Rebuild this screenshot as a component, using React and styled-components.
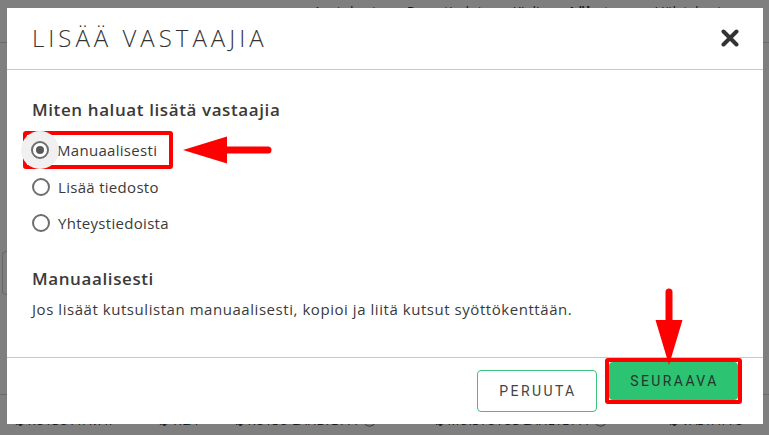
import React from 'react';
import styled, { createGlobalStyle } from 'styled-components';

const GlobalStyle = createGlobalStyle`
  html, body {
    margin: 0;
    padding: 0;
    background: #fff;
    font-family: "Open Sans", Lato, sans-serif;
    overflow: hidden;
  }
`;

/* page behind the dialog */
const Page = styled.div`
  width: 769px;
  height: 435px;
  display: flex;
  flex-direction: column;
  color: #333;
`;

const Nav = styled.div`
  height: 43px;
  box-sizing: border-box;
  border-bottom: 1px solid #d6d6d6;
  display: flex;
  gap: 30px;
  padding: 4px 0 0 313px;
  font-size: 14px;
  line-height: 16px;
`;

const NavItem = styled.span`
  font-weight: ${props => (props.active ? 700 : 400)};
`;

const Toolbar = styled.div`
  height: 352px;
  box-sizing: border-box;
  padding: 208px 0 0 2px;
  border-bottom: 1px solid #d6d6d6;
`;

const SearchBox = styled.div`
  width: 300px;
  height: 42px;
  border: 1px solid #ccc;
  border-radius: 4px;
`;

const TableHead = styled.div`
  display: grid;
  grid-template-columns: 144px 76px 200px 234px 1fr;
  padding: 18px 0 0 13px;
  font-size: 13px;
  line-height: 14px;
  text-transform: uppercase;
  white-space: nowrap;
`;

/* dialog */
const Overlay = styled.div`
  position: fixed;
  inset: 0;
  background: rgba(0, 0, 0, 0.5);
  display: flex;
  align-items: flex-start;
  padding: 8px 0 0 7px;
`;

const Modal = styled.div`
  position: relative;
  width: 756px;
  height: 416px;
  background: #fff;
  display: flex;
  flex-direction: column;
`;

const Header = styled.div`
  height: 62px;
  flex-shrink: 0;
  box-sizing: border-box;
  border-bottom: 1px solid #c8c8c8;
  display: flex;
  align-items: center;
  justify-content: space-between;
  padding: 0 24px 2px 25px;
`;

const Title = styled.h1`
  margin: 0;
  font-weight: 300;
  font-size: 24px;
  letter-spacing: 4px;
  color: #333;
`;

const CloseButton = styled.button`
  border: 0;
  background: none;
  padding: 0;
  width: 18px;
  height: 18px;
  display: flex;
  cursor: pointer;
`;

const Body = styled.div`
  flex: 1;
  padding: 29px 25px 0;
  border-bottom: 1px solid #c8c8c8;
`;

const Heading = styled.h2`
  margin: ${props => props.$top || 0}px 0 0;
  font-size: 17px;
  line-height: 22px;
  font-weight: 600;
  color: #3a3a3a;
  letter-spacing: 0.6px;
`;

const Options = styled.div`
  display: flex;
  flex-direction: column;
  margin-top: 10px;
`;

const Highlight = styled.div`
  display: inline-flex;
  align-self: flex-start;
  border: 4px solid #ff0000;
  border-radius: 3px;
  margin-left: ${props => props.$offset || 0}px;
`;

const OptionRow = styled.label`
  position: relative;
  display: flex;
  align-items: center;
  gap: 8px;
  height: ${props => props.$h || 36}px;
  padding-right: ${props => props.$pr || 0}px;
  padding-left: ${props => props.$pl || 0}px;
  font-size: 15px;
  color: #3a3a3a;
  letter-spacing: 0.3px;
`;

const Radio = styled.span`
  position: relative;
  box-sizing: border-box;
  width: 18px;
  height: 18px;
  border-radius: 50%;
  border: 2px solid #6e6e6e;
  background: #fff;
  flex-shrink: 0;
  &::before {
    content: '';
    display: ${props => (props.checked ? 'block' : 'none')};
    position: absolute;
    left: 50%;
    top: 50%;
    width: 38px;
    height: 38px;
    margin: -19px 0 0 -19px;
    border-radius: 50%;
    background: #f0f0f0;
    z-index: -1;
  }
  &::after {
    content: '';
    display: ${props => (props.checked ? 'block' : 'none')};
    position: absolute;
    left: 3px;
    top: 3px;
    width: 8px;
    height: 8px;
    border-radius: 50%;
    background: #585858;
  }
`;

const RadioWrap = styled.span`
  position: relative;
  z-index: 0;
  display: flex;
`;

const Text = styled.p`
  margin: 9px 0 0;
  font-size: 15px;
  line-height: 20px;
  color: #3a3a3a;
  letter-spacing: 0.55px;
`;

const Footer = styled.div`
  height: 66px;
  flex-shrink: 0;
  display: flex;
  align-items: center;
  justify-content: flex-end;
  gap: 8px;
  padding-right: 21px;
`;

const Button = styled.button`
  box-sizing: border-box;
  width: ${props => props.$w}px;
  height: ${props => props.$h}px;
  border: ${props => (props.$primary ? '0' : '1px solid #3cc47c')};
  border-radius: 4px;
  background: ${props => (props.$primary ? '#2cc373' : '#fff')};
  color: ${props => (props.$primary ? '#24352b' : '#444')};
  font-family: Roboto, sans-serif;
  font-size: 14px;
  letter-spacing: 2.4px;
  padding: 0 0 0 2px;
  cursor: pointer;
`;

const Pointer = styled.svg`
  position: absolute;
  left: ${props => props.$x}px;
  top: ${props => props.$y}px;
  overflow: visible;
`;

const options = [
  { label: 'Manuaalisesti', checked: true },
  { label: 'Lisää tiedosto' },
  { label: 'Yhteystiedoista' },
];

const App = () => (
  <>
    <GlobalStyle />
    <Page>
      <Nav>
        <NavItem>Asetukset</NavItem>
        <NavItem>Perustiedot</NavItem>
        <NavItem>Kieli</NavItem>
        <NavItem active>Lähetys</NavItem>
        <NavItem>Hälytykset</NavItem>
      </Nav>
      <Toolbar>
        <SearchBox />
      </Toolbar>
      <TableHead>
        <span>⇅ Kutsuttavat</span>
        <span>⇅ Tila</span>
        <span>⇅ Kutsu lähetetty ⓘ</span>
        <span>⇅ Muistutus lähetetty ⓘ</span>
        <span>⇅ Vastattu</span>
      </TableHead>
    </Page>

    <Overlay>
      <Modal>
        <Header>
          <Title>LISÄÄ VASTAAJIA</Title>
          <CloseButton aria-label="Sulje">
            <svg width="18" height="18" viewBox="0 0 18 18">
              <path d="M2.5 2.5 L15.5 15.5 M15.5 2.5 L2.5 15.5" stroke="#333" strokeWidth="4" strokeLinecap="round" />
            </svg>
          </CloseButton>
        </Header>

        <Body>
          <Heading>Miten haluat lisätä vastaajia</Heading>
          <Options>
            {options.map(o =>
              o.checked ? (
                <Highlight key={o.label} $offset={-9}>
                  <OptionRow $h={30} $pl={4} $pr={12}>
                    <RadioWrap><Radio checked /></RadioWrap>
                    {o.label}
                  </OptionRow>
                </Highlight>
              ) : (
                <OptionRow key={o.label}>
                  <RadioWrap><Radio /></RadioWrap>
                  {o.label}
                </OptionRow>
              )
            )}
          </Options>
          <Heading $top={27}>Manuaalisesti</Heading>
          <Text>Jos lisäät kutsulistan manuaalisesti, kopioi ja liitä kutsut syöttökenttään.</Text>
        </Body>

        <Footer>
          <Button $w={120} $h={42}>PERUUTA</Button>
          <Highlight>
            <Button $primary $w={129} $h={38}>SEURAAVA</Button>
          </Highlight>
        </Footer>

        <Pointer $x={173} $y={126} width="95" height="32" viewBox="0 0 95 32">
          <path d="M3 16 L47 2.5 L47 12.5 L88 12.5 A3.5 3.5 0 0 1 88 19.5 L47 19.5 L47 29.5 Z" fill="#ff0000" />
        </Pointer>
        <Pointer $x={648} $y={279} width="30" height="80" viewBox="0 0 30 80">
          <path d="M10.5 5 A3.5 3.5 0 0 1 17.5 5 L17.5 33 L27.5 33 L14 78 L0.5 33 L10.5 33 Z" fill="#ff0000" />
        </Pointer>
      </Modal>
    </Overlay>
  </>
);

export default App;
